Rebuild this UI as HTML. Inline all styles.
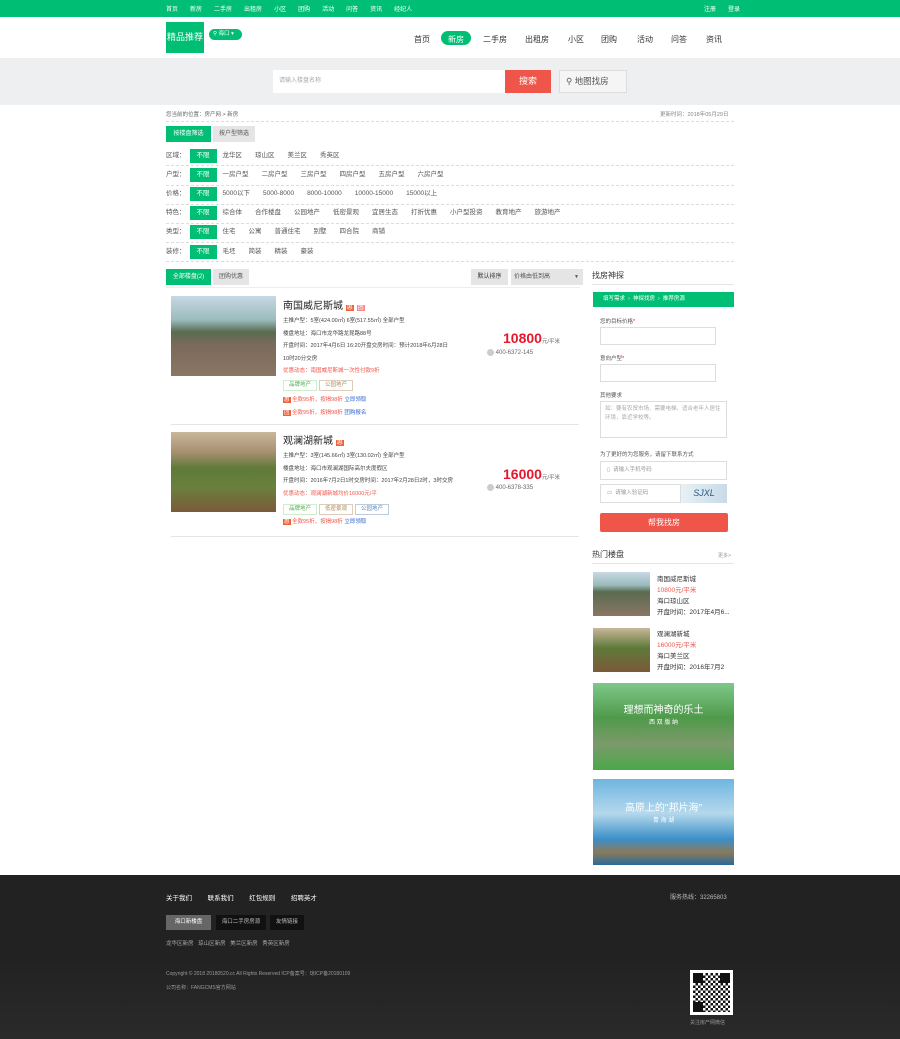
<!DOCTYPE html>
<html><head><meta charset="utf-8"><style>
*{margin:0;padding:0;box-sizing:border-box}
body{width:900px;height:1039px;background:#fff;font-family:"Liberation Sans","Noto Sans CJK SC",sans-serif;font-size:7px;color:#333;position:relative;overflow:hidden}
.a{position:absolute;white-space:nowrap}
.g{background:#00bf75}
.topbar{left:0;top:0;width:900px;height:17px}
.topbar span{color:#fff;font-size:6px;margin-right:12px}
.nav span{position:absolute;font-size:8px;color:#333;top:34px}
.dash{position:absolute;left:166px;width:568px;border-top:1px dashed #ddd}
.row{position:absolute;left:166px;font-size:6.5px;color:#555;height:14px;line-height:14px}
.row b{display:inline-block;background:#00bf75;color:#fff;font-weight:normal;padding:0 7px;margin:0 6px 0 4px}
.row i{font-style:normal;margin-right:13px}
.tag{display:inline-block;border:1px solid #cde;padding:0 5px;font-size:5.5px;height:11px;line-height:9px;margin-right:2px}
.inp{position:absolute;border:1px solid #ddd;background:#fff}
.qr{background:
linear-gradient(#111,#111) 0 0/10px 10px no-repeat,
linear-gradient(#111,#111) 100% 0/10px 10px no-repeat,
linear-gradient(#111,#111) 0 100%/10px 10px no-repeat,
repeating-conic-gradient(#111 0 25%,#fff 0 50%) 0 0/5px 5px}
</style></head><body>
<div class="a topbar g"><div class="a" style="left:166px;top:4px"><span>首页</span><span>新房</span><span>二手房</span><span>出租房</span><span>小区</span><span>团购</span><span>活动</span><span>问答</span><span>资讯</span><span>经纪人</span></div><div class="a" style="left:704px;top:4px"><span>注册</span><span style="margin:0">登录</span></div></div>
<div class="a g" style="left:166px;top:22px;width:38px;height:31px;color:#fff;font-size:9px;line-height:31px;text-align:center">精品推荐</div>
<div class="a g" style="left:209px;top:29px;width:33px;height:11px;border-radius:6px;color:#fff;font-size:5.5px;line-height:11px;padding-left:4px">⚲ 海口 ▾</div>
<div class="nav"><span style="left:414px">首页</span><div class="a g" style="left:441px;top:31px;width:30px;height:14px;border-radius:7px"></div><span style="left:448px;color:#fff">新房</span><span style="left:483px">二手房</span><span style="left:525px">出租房</span><span style="left:568px">小区</span><span style="left:601px">团购</span><span style="left:637px">活动</span><span style="left:671px">问答</span><span style="left:706px">资讯</span></div>
<div class="a" style="left:0;top:58px;width:900px;height:47px;background:#eeeff1"></div>
<div class="a" style="left:273px;top:70px;width:232px;height:23px;background:#fff;color:#aaa;font-size:6px;line-height:23px;padding-left:6px">请输入楼盘名称</div>
<div class="a" style="left:505px;top:70px;width:46px;height:23px;background:#f0554a;color:#fff;font-size:9px;line-height:23px;text-align:center">搜索</div>
<div class="a" style="left:559px;top:70px;width:68px;height:23px;background:#f5f5f5;border:1px solid #ddd;color:#555;font-size:8.5px;line-height:21px;padding-left:6px">⚲ 地图找房</div>
<div class="a" style="left:166px;top:110px;font-size:5.5px;color:#666">您当前的位置：房产网 &gt; 新房</div>
<div class="a" style="left:660px;top:110px;font-size:5.5px;color:#888">更新时间：2018年05月29日</div>
<div class="dash" style="top:121px"></div>
<div class="a g" style="left:166px;top:126px;width:45px;height:16px;color:#fff;font-size:6px;line-height:16px;text-align:center">按楼盘筛选</div>
<div class="a" style="left:213px;top:126px;width:42px;height:16px;background:#e5e5e5;color:#555;font-size:6px;line-height:16px;text-align:center">按户型筛选</div>
<div class="row" style="top:149px">区域：<b>不限</b><i>龙华区</i><i>琼山区</i><i>美兰区</i><i>秀英区</i></div>
<div class="dash" style="top:165px"></div>
<div class="row" style="top:168px">户型：<b>不限</b><i>一房户型</i><i>二房户型</i><i>三房户型</i><i>四房户型</i><i>五房户型</i><i>六房户型</i></div>
<div class="dash" style="top:185px"></div>
<div class="row" style="top:187px">价格：<b>不限</b><i>5000以下</i><i>5000-8000</i><i>8000-10000</i><i>10000-15000</i><i>15000以上</i></div>
<div class="dash" style="top:204px"></div>
<div class="row" style="top:206px">特色：<b>不限</b><i>综合体</i><i>合作楼盘</i><i>公园地产</i><i>低密景观</i><i>宜居生态</i><i>打折优惠</i><i>小户型投资</i><i>教育地产</i><i>旅游地产</i></div>
<div class="dash" style="top:223px"></div>
<div class="row" style="top:225px">类型：<b>不限</b><i>住宅</i><i>公寓</i><i>普通住宅</i><i>别墅</i><i>四合院</i><i>商铺</i></div>
<div class="dash" style="top:242px"></div>
<div class="row" style="top:245px">装修：<b>不限</b><i>毛坯</i><i>简装</i><i>精装</i><i>豪装</i></div>
<div class="dash" style="top:261px"></div>
<div class="a g" style="left:166px;top:269px;width:45px;height:16px;color:#fff;font-size:6px;line-height:16px;text-align:center">全部楼盘(2)</div>
<div class="a" style="left:213px;top:269px;width:36px;height:16px;background:#e5e5e5;color:#555;font-size:6px;line-height:16px;text-align:center">团购优惠</div>
<div class="a" style="left:471px;top:269px;width:37px;height:16px;background:#e5e5e5;color:#333;font-size:6px;line-height:16px;text-align:center">默认排序</div>
<div class="a" style="left:511px;top:269px;width:72px;height:16px;background:#e5e5e5;color:#555;font-size:6px;line-height:16px;padding-left:3px">价格由低到高 <span style="float:right;margin-right:4px;font-size:5px">▼</span></div>
<div class="a" style="left:166px;top:287px;width:414px;border-top:1px solid #eee"></div>

<div class="a" style="left:171px;top:296px;width:105px;height:80px;background:linear-gradient(#c8d8e4 0%,#9bb 30%,#5a6b50 45%,#7a6a5a 60%,#8a7664 100%)"></div>
<div class="a" style="left:283px;top:297px;font-size:10px;color:#222">南国威尼斯城 <span style="background:#f0613a;color:#fff;font-size:6px;padding:0 1px">惠</span> <span style="background:#f58a8a;color:#fff;font-size:6px;padding:0 1px">团</span></div>
<div class="a" style="left:283px;top:315px;font-size:5.5px;color:#444;line-height:12.5px">主推户型：5室(424.00㎡) 6室(517.55㎡) 全部户型<br>楼盘地址：海口市龙华路龙昆路88号<br>开盘时间：2017年4月6日 16:20开盘交房时间：预计2018年6月28日<br>10时20分交房<br><span style="color:#f0554a">优惠动态：南国威尼斯城一次性付款9折</span></div>
<div class="a" style="left:283px;top:380px"><span class="tag" style="color:#5a5;border-color:#cec">品牌地产</span><span class="tag" style="color:#a85;border-color:#dcb">公园地产</span></div>
<div class="a" style="left:283px;top:394px;font-size:5.5px;color:#f0554a;line-height:12.5px"><span style="background:#f0613a;color:#fff;padding:0 1px">惠</span> 全款95折，按揭98折 <span style="color:#36c">立即领取</span><br><span style="background:#f0613a;color:#fff;padding:0 1px">团</span> 全款95折，按揭98折 <span style="color:#36c">团购报名</span></div>
<div class="a" style="left:503px;top:330px;font-size:14px;font-weight:bold;color:#e6162d">10800<span style="font-size:5.5px;font-weight:normal;color:#666">元/平米</span></div>
<div class="a" style="left:487px;top:349px;font-size:6px;color:#666"><span style="display:inline-block;width:7px;height:7px;border-radius:50%;background:#ccc;vertical-align:middle"></span> 400-6372-145</div>
<div class="a" style="left:171px;top:424px;width:408px;border-top:1px solid #e5e5e5"></div>

<div class="a" style="left:171px;top:432px;width:105px;height:80px;background:linear-gradient(#c9b79a 0%,#a89070 25%,#5f7a3a 45%,#6b7f3e 70%,#7a5a3a 100%)"></div>
<div class="a" style="left:283px;top:432px;font-size:10px;color:#222">观澜湖新城 <span style="background:#f0613a;color:#fff;font-size:6px;padding:0 1px">惠</span></div>
<div class="a" style="left:283px;top:450px;font-size:5.5px;color:#444;line-height:12.5px">主推户型：3室(145.66㎡) 3室(130.02㎡) 全部户型<br>楼盘地址：海口市观澜湖国际高尔夫度假区<br>开盘时间：2016年7月2日1时交房时间：2017年2月28日2时，3时交房<br><span style="color:#f0554a">优惠动态：观澜湖新城均价16000元/平</span></div>
<div class="a" style="left:283px;top:504px"><span class="tag" style="color:#5a5;border-color:#cec">品牌地产</span><span class="tag" style="color:#a85;border-color:#dcb">低密景观</span><span class="tag" style="color:#58b;border-color:#bcd">公园地产</span></div>
<div class="a" style="left:283px;top:517px;font-size:5.5px;color:#f0554a"><span style="background:#f0613a;color:#fff;padding:0 1px">惠</span> 全款95折，按揭98折 <span style="color:#36c">立即领取</span></div>
<div class="a" style="left:503px;top:466px;font-size:14px;font-weight:bold;color:#e6162d">16000<span style="font-size:5.5px;font-weight:normal;color:#666">元/平米</span></div>
<div class="a" style="left:487px;top:484px;font-size:6px;color:#666"><span style="display:inline-block;width:7px;height:7px;border-radius:50%;background:#ccc;vertical-align:middle"></span> 400-6378-335</div>
<div class="a" style="left:171px;top:536px;width:408px;border-top:1px solid #e5e5e5"></div>

<div class="a" style="left:592px;top:270px;font-size:8px;color:#333">找房神探</div>
<div class="a" style="left:592px;top:284px;width:142px;border-top:1px solid #e5e5e5"></div>
<div class="a g" style="left:593px;top:292px;width:141px;height:15px;color:#fff;font-size:5.5px;line-height:15px;padding-left:10px">填写需求 &nbsp;›&nbsp; 神探找房 &nbsp;›&nbsp; 推荐房源</div>
<div class="a" style="left:600px;top:317px;font-size:5.5px;color:#555">您的目标价格<span style="color:red">*</span></div>
<div class="inp" style="left:600px;top:327px;width:116px;height:18px"></div>
<div class="a" style="left:600px;top:354px;font-size:5.5px;color:#555">意向户型<span style="color:red">*</span></div>
<div class="inp" style="left:600px;top:364px;width:116px;height:18px"></div>
<div class="a" style="left:600px;top:391px;font-size:5.5px;color:#555">其他要求</div>
<div class="inp" style="left:600px;top:401px;width:127px;height:37px;font-size:5.5px;color:#aaa;padding:3px 4px;white-space:normal;line-height:9px">如：要有农贸市场、需要电梯、适合老年人居住环境，靠近学校等。</div>
<div class="a" style="left:600px;top:450px;font-size:5.5px;color:#555">为了更好的为您服务，请留下联系方式</div>
<div class="inp" style="left:600px;top:461px;width:127px;height:19px;font-size:5.5px;color:#999;line-height:17px;padding-left:6px">▯ &nbsp;请输入手机号码</div>
<div class="inp" style="left:600px;top:484px;width:81px;height:19px;font-size:5.5px;color:#999;line-height:17px;padding-left:6px">▭ &nbsp;请输入验证码</div>
<div class="a" style="left:681px;top:484px;width:46px;height:19px;background:linear-gradient(90deg,#e8f0f5,#c7dbe8);color:#2a5b8a;font-size:9px;font-style:italic;line-height:19px;text-align:center">SJXL</div>
<div class="a" style="left:600px;top:513px;width:128px;height:19px;background:#f0554a;border-radius:2px;color:#fff;font-size:8px;line-height:19px;text-align:center">帮我找房</div>
<div class="a" style="left:592px;top:549px;font-size:8px;color:#333">热门楼盘</div>
<div class="a" style="left:718px;top:552px;font-size:5px;color:#999">更多&gt;</div>
<div class="a" style="left:592px;top:563px;width:142px;border-top:1px solid #e5e5e5"></div>
<div class="a" style="left:593px;top:572px;width:57px;height:44px;background:linear-gradient(#c8d8e4 0%,#9bb 30%,#5a6b50 45%,#8a7664 100%)"></div>
<div class="a" style="left:657px;top:574px;font-size:6.5px;line-height:11px;color:#333">南国威尼斯城<br><span style="color:#f0554a">10800元/平米</span><br>海口琼山区<br>开盘时间：2017年4月6...</div>
<div class="a" style="left:593px;top:628px;width:57px;height:44px;background:linear-gradient(#c9b79a 0%,#5f7a3a 45%,#7a5a3a 100%)"></div>
<div class="a" style="left:657px;top:629px;font-size:6.5px;line-height:11px;color:#333">观澜湖新城<br><span style="color:#f0554a">16000元/平米</span><br>海口美兰区<br>开盘时间：2016年7月2</div>
<div class="a" style="left:593px;top:683px;width:141px;height:87px;background:linear-gradient(#7ec88a 0%,#4f9a4a 40%,#7c9a6a 70%,#49a84a 100%);color:#fff;text-align:center;font-size:10px;padding-top:18px">理想而神奇的乐土<br><span style="font-size:6px">西 双 版 纳</span></div>
<div class="a" style="left:593px;top:779px;width:141px;height:86px;background:linear-gradient(#6fb5e0 0%,#b5d8ec 40%,#3b8fc8 70%,#8a7a5a 85%,#2a6a9a 100%);color:#fff;text-align:center;font-size:10px;padding-top:20px">高原上的"邦片海"<br><span style="font-size:6px">青 海 湖</span></div>

<div class="a" style="left:0;top:875px;width:900px;height:164px;background:#222"></div>
<div class="a" style="left:0;top:960px;width:900px;height:79px;background:linear-gradient(transparent,#2a2a2a)"></div>
<div class="a" style="left:166px;top:892px;font-size:6.5px;color:#fff;word-spacing:6px">关于我们 &nbsp;联系我们 &nbsp;红包规则 &nbsp;招聘英才</div>
<div class="a" style="left:670px;top:892px;font-size:6px;color:#bbb">服务热线：32265803</div>
<div class="a" style="left:166px;top:915px;width:45px;height:15px;background:#666;color:#fff;font-size:5.5px;line-height:15px;text-align:center">海口新楼盘</div>
<div class="a" style="left:216px;top:915px;width:50px;height:15px;background:#111;color:#bbb;font-size:5.5px;line-height:15px;text-align:center">海口二手房房源</div>
<div class="a" style="left:270px;top:915px;width:34px;height:15px;background:#111;color:#bbb;font-size:5.5px;line-height:15px;text-align:center">友情链接</div>
<div class="a" style="left:166px;top:939px;font-size:5.5px;color:#aaa">龙华区新房 &nbsp; 琼山区新房 &nbsp; 美兰区新房 &nbsp; 秀英区新房</div>
<div class="a" style="left:166px;top:970px;font-size:5px;color:#999">Copyright © 2018 20180520.cc All Rights Reserved ICP备案号：琼ICP备20180109</div>
<div class="a" style="left:166px;top:984px;font-size:5px;color:#999">公司名称：FANGCMS官方网站</div>
<div class="a" style="left:690px;top:970px;width:43px;height:45px;background:#fff;padding:3px"><div class="qr" style="width:100%;height:100%"></div></div>
<div class="a" style="left:690px;top:1019px;font-size:5px;color:#999">关注房产网微信</div>
</body></html>
